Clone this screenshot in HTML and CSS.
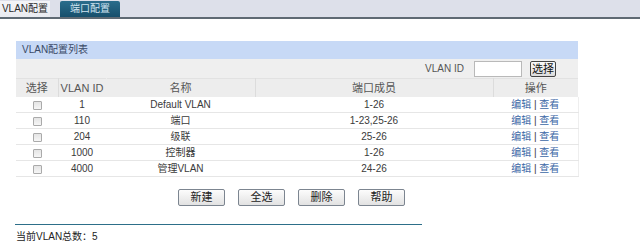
FILE: index.html
```html
<!DOCTYPE html>
<html lang="zh-CN">
<head>
<meta charset="utf-8">
<title>VLAN配置</title>
<link rel="stylesheet" href="styles.css">
</head>
<body>
<div class="topbar">
  <div class="tab tab-active">VLAN配置</div>
  <div class="tab tab-dark">端口配置</div>
</div>
<div class="panel">
  <div class="panel-title">VLAN配置列表</div>
  <div class="toolbar">
    <span class="tb-label">VLAN ID</span>
    <span class="tb-input"></span>
    <span class="tb-btn">选择</span>
  </div>
  <table class="grid">
    <colgroup>
      <col class="c1"><col class="c2"><col class="c3"><col class="c4"><col class="c5">
    </colgroup>
    <thead>
      <tr><th>选择</th><th class="nosep">VLAN ID</th><th>名称</th><th>端口成员</th><th class="last">操作</th></tr>
    </thead>
    <tbody>
      <tr><td><span class="cb"></span></td><td>1</td><td>Default VLAN</td><td>1-26</td><td class="ops"><a>编辑</a> | <a>查看</a></td></tr>
      <tr><td><span class="cb"></span></td><td>110</td><td>端口</td><td>1-23,25-26</td><td class="ops"><a>编辑</a> | <a>查看</a></td></tr>
      <tr><td><span class="cb"></span></td><td>204</td><td>级联</td><td>25-26</td><td class="ops"><a>编辑</a> | <a>查看</a></td></tr>
      <tr><td><span class="cb"></span></td><td>1000</td><td>控制器</td><td>1-26</td><td class="ops"><a>编辑</a> | <a>查看</a></td></tr>
      <tr><td><span class="cb"></span></td><td>4000</td><td>管理VLAN</td><td>24-26</td><td class="ops"><a>编辑</a> | <a>查看</a></td></tr>
    </tbody>
  </table>
</div>
<div class="actions">
  <span class="btn">新建</span>
  <span class="btn">全选</span>
  <span class="btn">删除</span>
  <span class="btn">帮助</span>
</div>
<div class="divider"></div>
<div class="total">当前VLAN总数：5</div>
</body>
</html>
```
FILE: styles.css
```css
html, body {
  margin: 0;
  padding: 0;
  background: #ffffff;
}
body {
  font-family: "Liberation Sans", "Noto Sans CJK SC", sans-serif;
  font-size: 10px;
  line-height: 13px;
  color: #3a3a3a;
  width: 640px;
  height: 242px;
  overflow: hidden;
  white-space: nowrap;
}
.topbar {
  display: flex;
  align-items: flex-end;
  height: 17px;
  background: #dde0ea;
  border-bottom: 2px solid #5f6a74;
}
.tab {
  height: 16px;
  line-height: 16px;
  font-size: 10px;
  text-align: center;
}
.tab-active {
  width: 50px;
  background: linear-gradient(#f4f5f8, #e9ebf0);
  color: #2a2a2a;
}
.tab-dark {
  width: 60px;
  margin-left: 10px;
  background: linear-gradient(#2a6d8c, #174f6c);
  color: #cfe3f0;
  border-radius: 2px 2px 0 0;
}
.panel {
  margin: 22px 0 0 16px;
  width: 562px;
}
.panel-title {
  height: 18px;
  line-height: 18px;
  padding-left: 6px;
  background: #c7d9f6;
  color: #3a4a66;
}
.toolbar {
  display: flex;
  align-items: center;
  justify-content: flex-end;
  height: 19px;
  background: #efefef;
  padding-right: 22px;
}
.tb-label {
  margin-right: 10px;
  color: #555;
}
.tb-input {
  width: 46px;
  height: 14px;
  background: #fff;
  border: 1px solid #b9b9b9;
  margin-right: 8px;
}
.tb-btn {
  width: 24px;
  height: 14px;
  line-height: 14px;
  text-align: center;
  font-size: 11px;
  color: #111;
  background: linear-gradient(#fafafa, #dcdcdc);
  border: 1px solid #444;
  border-radius: 2px;
}
.grid {
  width: 562px;
  border-collapse: collapse;
  table-layout: fixed;
}
.c1 { width: 42px; }
.c2 { width: 48px; }
.c3 { width: 149px; }
.c4 { width: 238px; }
.c5 { width: 85px; }
.grid th {
  height: 18px;
  padding: 0;
  font-weight: normal;
  font-size: 11px;
  line-height: 18px;
  background: #ededed;
  color: #555;
  border-right: 1px solid #dcdcdc;
  border-top: 1px solid #e2e2e2;
}
.grid th.nosep { border-right-color: #ededed; }
.grid th.last { border-right: none; }
.grid td {
  height: 15px;
  padding: 0;
  text-align: center;
  border-bottom: 1px solid #e6e6e6;
  color: #3a3a3a;
  line-height: 15px;
}
.grid tbody tr td:last-child { border-right: 1px solid #eeeeee; }
.cb {
  display: inline-block;
  width: 7px;
  height: 7px;
  border: 1px solid #aaaaaa;
  background: linear-gradient(#e4e4e4, #f6f6f6);
  border-radius: 1px;
  vertical-align: middle;
}
.ops {
  color: #8a8a8a;
}
.ops a {
  color: #3b67a6;
}
.actions {
  display: flex;
  gap: 13px;
  margin: 12px 0 0 178px;
}
.btn {
  width: 45px;
  height: 15px;
  line-height: 15px;
  text-align: center;
  font-size: 11px;
  color: #222;
  background: linear-gradient(#fcfcfc, #e2e2e2);
  border: 1px solid #7c8590;
  border-radius: 2px;
}
.divider {
  margin: 18px 0 0 15px;
  width: 407px;
  height: 1px;
  background: #2d6f89;
}
.total {
  margin: 6px 0 0 16px;
  font-size: 10px;
  line-height: 11px;
  color: #222;
}
```
